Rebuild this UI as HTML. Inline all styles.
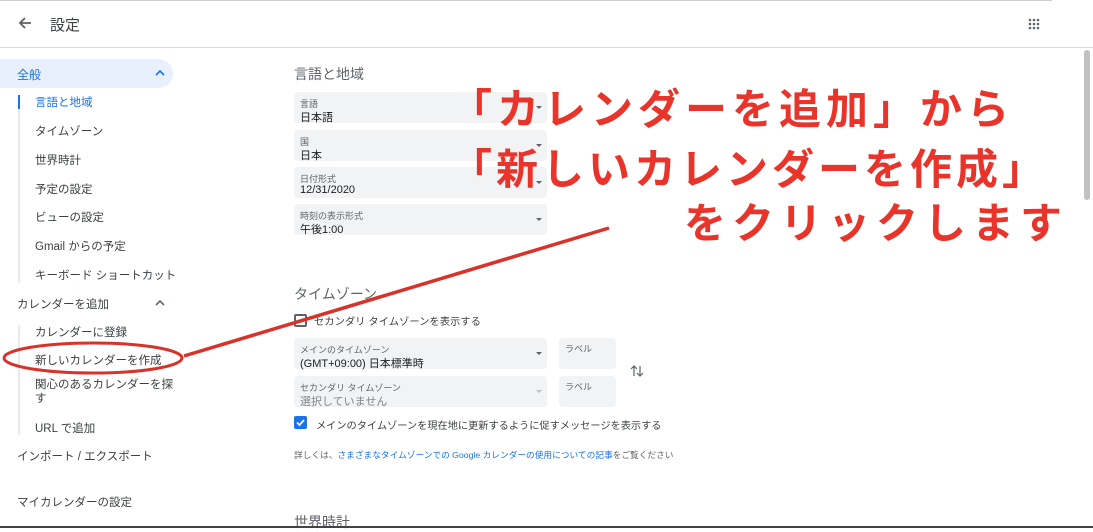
<!DOCTYPE html>
<html><head><meta charset="utf-8"><style>
*{margin:0;padding:0;box-sizing:border-box}
body{width:1093px;height:528px;overflow:hidden;background:#fff;position:relative;font-family:"Liberation Sans","Noto Sans CJK JP",sans-serif;color:#3c4043}
.a{position:absolute;white-space:nowrap}
.s{font-size:11.5px;color:#3c4043}
.box{position:absolute;background:#f1f3f4;border-radius:4px}
.lb{position:absolute;left:6px;top:5px;font-size:9px;color:#5f6368;white-space:nowrap}
.vl{position:absolute;left:6px;top:17px;font-size:11px;color:#202124;white-space:nowrap}
.dd{position:absolute;right:5px;top:14px;width:0;height:0;border-left:3px solid transparent;border-right:3px solid transparent;border-top:3px solid #5f6368}
.red{position:absolute;white-space:nowrap;color:#e8342a;font-weight:bold;font-size:42px;letter-spacing:4px;font-family:"Noto Sans CJK JP",sans-serif;line-height:1}
</style></head><body>
<div class="a" style="left:0;top:0;width:1052px;height:1px;background:#d0d0d0"></div>
<div class="a" style="left:0;top:47px;width:1093px;height:1px;background:#dadce0"></div>
<svg class="a" style="left:17px;top:15px" width="16" height="16" viewBox="0 0 16 16"><path d="M14 8H3M8 3L3 8l5 5" stroke="#5f6368" stroke-width="1.8" fill="none"/></svg>
<div class="a" style="left:50px;top:14px;font-size:15px;color:#3c4043">設定</div>
<svg class="a" style="left:1028px;top:18px" width="12" height="12"><g fill="#5f6368"><circle cx="2" cy="2" r="1.3"/><circle cx="6" cy="2" r="1.3"/><circle cx="10" cy="2" r="1.3"/><circle cx="2" cy="6" r="1.3"/><circle cx="6" cy="6" r="1.3"/><circle cx="10" cy="6" r="1.3"/><circle cx="2" cy="10" r="1.3"/><circle cx="6" cy="10" r="1.3"/><circle cx="10" cy="10" r="1.3"/></g></svg>
<div class="a" style="left:1084px;top:50px;width:6px;height:150px;background:#c1c1c1;border-radius:3px"></div>

<div class="a" style="left:0;top:59px;width:173px;height:29px;background:#e8f0fe;border-radius:0 15px 15px 0"></div>
<div class="a" style="left:17px;top:66px;font-size:12px;color:#1a73e8">全般</div>
<svg class="a" style="left:155px;top:69px" width="10" height="8"><path d="M1 6l4-4 4 4" stroke="#1a73e8" stroke-width="1.6" fill="none"/></svg>
<div class="a" style="left:18px;top:95px;width:2px;height:188px;background:#e8eaed"></div>
<div class="a" style="left:18px;top:95px;width:2px;height:14px;background:#1a73e8"></div>
<div class="a s" style="left:35px;top:94px;color:#1a73e8">言語と地域</div>
<div class="a s" style="left:35px;top:123px">タイムゾーン</div>
<div class="a s" style="left:35px;top:152px">世界時計</div>
<div class="a s" style="left:35px;top:181px">予定の設定</div>
<div class="a s" style="left:35px;top:209px">ビューの設定</div>
<div class="a s" style="left:35px;top:238px">Gmail からの予定</div>
<div class="a s" style="left:35px;top:267px">キーボード ショートカット</div>
<div class="a s" style="left:17px;top:296px">カレンダーを追加</div>
<svg class="a" style="left:155px;top:299px" width="10" height="8"><path d="M1 6l4-4 4 4" stroke="#5f6368" stroke-width="1.6" fill="none"/></svg>
<div class="a" style="left:18px;top:325px;width:2px;height:110px;background:#e8eaed"></div>
<div class="a s" style="left:35px;top:324px">カレンダーに登録</div>
<div class="a s" style="left:35px;top:352px">新しいカレンダーを作成</div>
<div class="a s" style="left:35px;top:378px;line-height:14px">関心のあるカレンダーを探<br>す</div>
<div class="a s" style="left:35px;top:420px">URL で追加</div>
<div class="a s" style="left:17px;top:448px">インポート / エクスポート</div>
<div class="a s" style="left:17px;top:494px">マイカレンダーの設定</div>

<div class="a" style="left:294px;top:64px;font-size:14px;color:#5f6368">言語と地域</div>
<div class="box" style="left:294px;top:92px;width:253px;height:31px"><div class="lb">言語</div><div class="vl">日本語</div><div class="dd"></div></div>
<div class="box" style="left:294px;top:130px;width:253px;height:31px"><div class="lb">国</div><div class="vl">日本</div><div class="dd"></div></div>
<div class="box" style="left:294px;top:167px;width:253px;height:31px"><div class="lb">日付形式</div><div class="vl">12/31/2020</div><div class="dd"></div></div>
<div class="box" style="left:294px;top:204px;width:253px;height:31px"><div class="lb">時刻の表示形式</div><div class="vl">午後1:00</div><div class="dd"></div></div>

<div class="a" style="left:294px;top:284px;font-size:14px;color:#5f6368">タイムゾーン</div>
<div class="a" style="left:294px;top:314px;width:13px;height:13px;border:2px solid #5f6368;border-radius:2px"></div>
<div class="a" style="left:314px;top:313px;font-size:10.3px;color:#3c4043">セカンダリ タイムゾーンを表示する</div>
<div class="box" style="left:294px;top:338px;width:253px;height:31px"><div class="lb">メインのタイムゾーン</div><div class="vl">(GMT+09:00) 日本標準時</div><div class="dd"></div></div>
<div class="box" style="left:559px;top:338px;width:57px;height:31px"><div class="lb" style="top:4px">ラベル</div></div>
<div class="box" style="left:294px;top:376px;width:253px;height:31px"><div class="lb">セカンダリ タイムゾーン</div><div class="vl" style="color:#80868b">選択していません</div><div class="dd" style="border-top-color:#bdc1c6"></div></div>
<div class="box" style="left:559px;top:376px;width:57px;height:31px"><div class="lb" style="top:4px">ラベル</div></div>
<svg class="a" style="left:630px;top:363px" width="14" height="16"><path d="M4 13V3M1 6l3-3 3 3M10 3v10M7 10l3 3 3-3" stroke="#5f6368" stroke-width="1.2" fill="none"/></svg>
<div class="a" style="left:294px;top:416px;width:13px;height:13px;background:#1a73e8;border-radius:2px"></div>
<svg class="a" style="left:294px;top:416px" width="13" height="13"><path d="M3 6.5l2.5 2.5L10 4" stroke="#fff" stroke-width="1.7" fill="none"/></svg>
<div class="a" style="left:316px;top:417px;font-size:10.2px;color:#3c4043">メインのタイムゾーンを現在地に更新するように促すメッセージを表示する</div>
<div class="a" style="left:294px;top:448px;font-size:8.7px;color:#5f6368">詳しくは、<span style="color:#1a73e8">さまざまなタイムゾーンでの Google カレンダーの使用についての記事</span>をご覧ください</div>
<div class="a" style="left:294px;top:512px;font-size:14px;color:#5f6368">世界時計</div>
<div class="a" style="left:0;top:526px;width:1093px;height:2px;background:#444"></div>

<svg class="a" style="left:0;top:0" width="1093" height="528"><ellipse cx="93" cy="358" rx="89" ry="15" stroke="#d9322b" stroke-width="3" fill="none"/><path d="M184 356L609 228" stroke="#d9322b" stroke-width="3.5"/></svg>
<div class="red" style="left:450px;top:86px;letter-spacing:5px">「カレンダーを追加」から</div>
<div class="red" style="left:450px;top:146px">「新しいカレンダーを作成」</div>
<div class="red" style="left:684px;top:200px;letter-spacing:6px">をクリックします</div>
</body></html>
